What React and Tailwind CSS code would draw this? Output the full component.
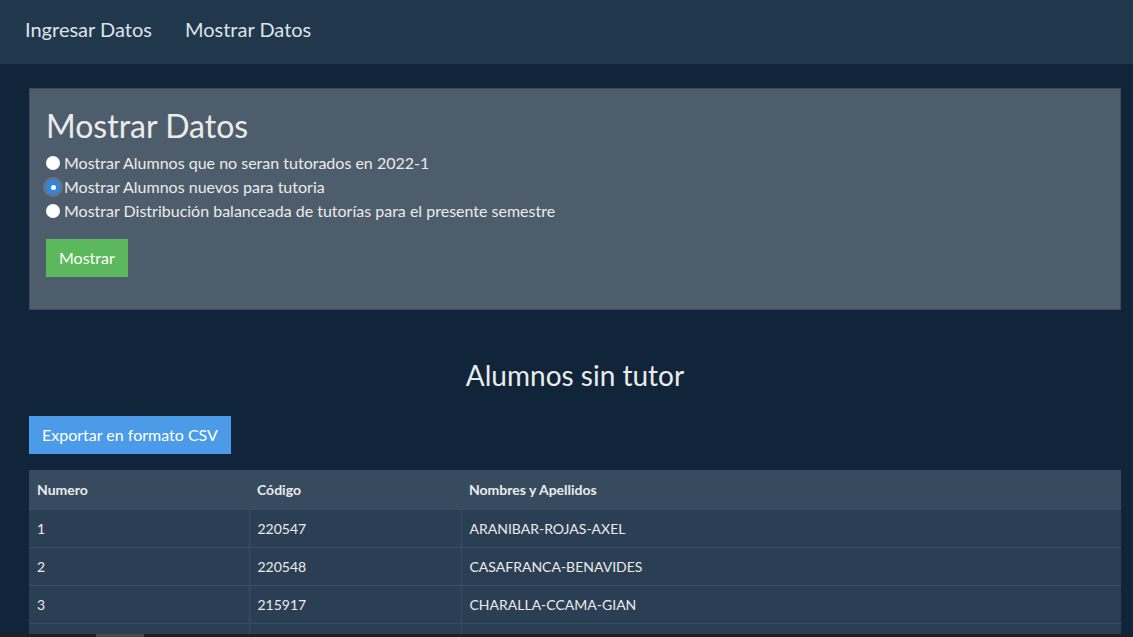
const alumnos = [
  { n: 1, codigo: '220547', nombre: 'ARANIBAR-ROJAS-AXEL' },
  { n: 2, codigo: '220548', nombre: 'CASAFRANCA-BENAVIDES' },
  { n: 3, codigo: '215917', nombre: 'CHARALLA-CCAMA-GIAN' },
  { n: 4, codigo: '', nombre: '' },
]

const opciones = [
  'Mostrar Alumnos que no seran tutorados en 2022-1',
  'Mostrar Alumnos nuevos para tutoria',
  'Mostrar Distribución balanceada de tutorías para el presente semestre',
]

export default function App() {
  return (
    <div className="h-[637px] overflow-hidden bg-[#10243a] text-[#ebebeb]" style={{ fontFamily: 'Lato, "Open Sans", sans-serif' }}>
      {/* Navbar */}
      <nav className="h-16 bg-[#20374c] flex items-center pl-[25px] pb-[6px] gap-[33px] text-[20px] text-[#dde3e9]">
        <span>Ingresar Datos</span>
        <span>Mostrar Datos</span>
      </nav>

      <div className="pl-[29px] pr-[12px] pt-6">
        {/* Jumbotron */}
        <div className="bg-[#4e5d6c] border border-[#3d4b59] h-[222px] px-4 pt-[17px]">
          <h1 className="text-[32px] leading-[40px] text-[#ebebeb] mb-[5px]">Mostrar Datos</h1>
          <div className="flex flex-col text-[16px] leading-6">
            {opciones.map((o, i) => (
              <label key={i} className="flex items-center">
                {i === 1 ? (
                  <span className="w-[14px] h-[14px] rounded-full bg-[#2f86e0] ring-[3px] ring-[#6d8db0]/50 flex items-center justify-center">
                    <span className="w-[5px] h-[5px] rounded-full bg-white" />
                  </span>
                ) : (
                  <span className="w-[14px] h-[14px] rounded-full bg-white" />
                )}
                <span className="ml-[4px]">{o}</span>
              </label>
            ))}
          </div>
          <button className="mt-[16px] h-[38px] px-[13px] bg-[#5cb85c] text-white text-[16px]">Mostrar</button>
        </div>

        <h2 className="text-center text-[28px] mt-[47px] leading-[36px]">Alumnos sin tutor</h2>

        <button className="mt-[23px] h-[38px] px-[13px] bg-[#4c9be8] text-white text-[16px]">Exportar en formato CSV</button>

        <table className="mt-4 w-full text-[14px] border-collapse">
          <thead>
            <tr className="bg-[#374b5f] h-[39px]">
              <th className="text-left font-bold text-[14px] pl-2 w-[220px]">Numero</th>
              <th className="text-left font-bold text-[14px] pl-2 w-[212px]">Código</th>
              <th className="text-left font-bold text-[14px] pl-2">Nombres y Apellidos</th>
            </tr>
          </thead>
          <tbody>
            {alumnos.map(a => (
              <tr key={a.n} className="bg-[#2b3f54] h-[38px] border-t border-[#3a4d61]">
                <td className="pl-2 border-r border-[#3a4d61]">{a.codigo ? a.n : ''}</td>
                <td className="pl-2 border-r border-[#3a4d61]">{a.codigo}</td>
                <td className="pl-2">{a.nombre}</td>
              </tr>
            ))}
          </tbody>
        </table>
      </div>

      {/* scrollbar horizontal */}
      <div className="fixed bottom-0 left-0 right-0 h-[3px] bg-[#202020]">
        <div className="ml-[96px] w-[48px] h-full bg-[#4a4a4a]" />
      </div>
    </div>
  )
}
